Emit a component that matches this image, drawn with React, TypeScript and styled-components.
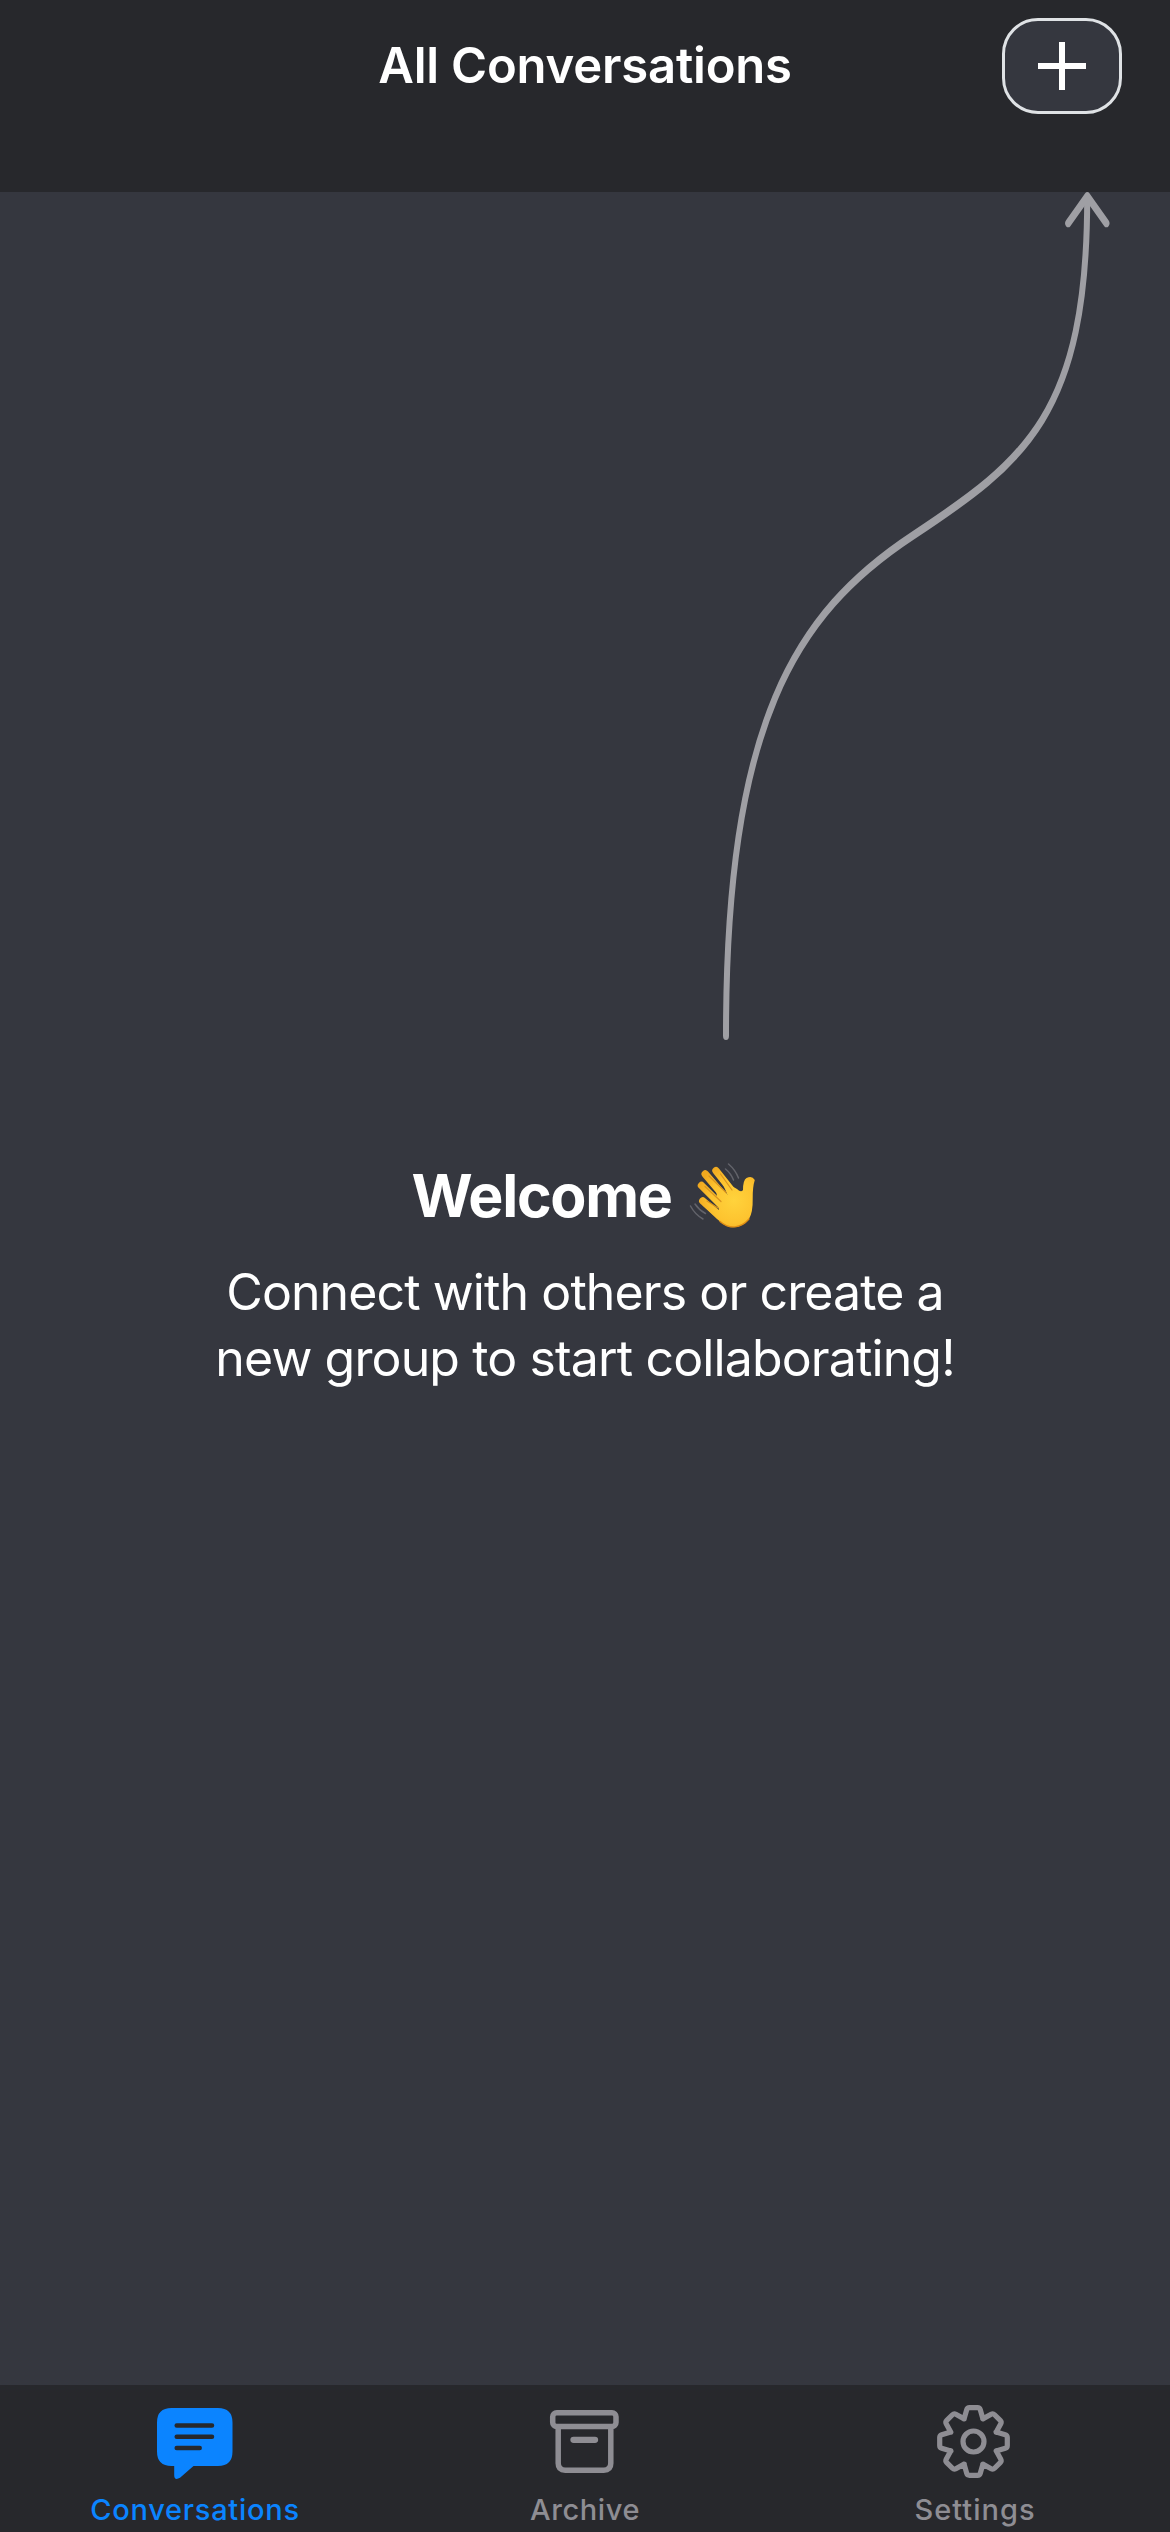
import React from "react";
import styled, { createGlobalStyle } from "styled-components";

const GlobalStyle = createGlobalStyle`
  * { box-sizing: border-box; }
  body { margin: 0; background: #35373f; }
`;

const Screen = styled.div`
  display: flex;
  flex-direction: column;
  width: 1170px;
  height: 2532px;
  overflow: hidden;
  background: #35373f;
  color: #fff;
  font-family: Inter, "Liberation Sans", sans-serif;
`;

const Header = styled.header`
  display: grid;
  grid-template-columns: 1fr auto 1fr;
  align-items: start;
  height: 192px;
  padding: 18px 48px 0;
  background: #27282c;
`;

const Title = styled.h1`
  grid-column: 2;
  margin: 0;
  font-size: 49px;
  font-weight: 600;
  line-height: 96px;
  letter-spacing: -0.2px;
  white-space: nowrap;
`;

const AddButton = styled.button`
  display: flex;
  align-items: center;
  justify-content: center;
  justify-self: end;
  width: 120px;
  height: 96px;
  padding: 0;
  border: 3px solid #dfe2e5;
  border-radius: 36px;
  background: #35373f;
  color: #fff;
`;

const Main = styled.main`
  display: flex;
  flex: 1;
  flex-direction: column;
  align-items: center;
`;

const Hint = styled.svg`
  display: block;
  align-self: flex-end;
  margin-right: 57px;
`;

const Welcome = styled.h2`
  display: flex;
  align-items: center;
  gap: 9px;
  height: 72px;
  margin: 118px 0 0;
  font-size: 59px;
  font-weight: 700;
  line-height: 72px;
  letter-spacing: -1.3px;
`;

const Hand = styled.svg`
  display: block;
  flex: none;
  margin: 0 -12px 2px 0;
`;

const Message = styled.p`
  margin: 27px 0 0;
  font-size: 50px;
  line-height: 66px;
  text-align: center;
  white-space: nowrap;
`;

const Line = styled.span<{ $spacing: number }>`
  display: block;
  letter-spacing: ${(p) => p.$spacing}px;
`;

const TabBar = styled.nav`
  display: grid;
  grid-template-columns: repeat(3, 1fr);
  height: 147px;
  background: #27282c;
`;

const Tab = styled.a<{ $active?: boolean; $spacing: number }>`
  display: flex;
  flex-direction: column;
  align-items: center;
  padding-top: 16px;
  color: ${(p) => (p.$active ? "#0b84ff" : "#8e8d93")};
  font-size: 29px;
  font-weight: 500;
  line-height: 36px;
  letter-spacing: ${(p) => p.$spacing}px;
`;

const TabIcon = styled.svg`
  display: block;
  width: 80px;
  height: 80px;
  margin-bottom: 11px;
`;

const PlusIcon = () => (
  <svg width="48" height="48" viewBox="0 0 48 48" stroke="currentColor" strokeWidth="6">
    <path d="M24 0V48M0 24H48" />
  </svg>
);

/* The arrow is stretched vertically, so diagonal runs come out slightly heavier. */
const HintArrow = () => (
  <Hint
    width="400"
    height="850"
    viewBox="713 137.140 400 607.140"
    preserveAspectRatio="none"
    fill="none"
    stroke="#9f9fa4"
    strokeWidth="6"
    strokeLinecap="round"
    strokeLinejoin="round"
  >
    <path d="M1087.200 141.400C1087.200 295.700 1025 329.600 913 382.500C794.300 438.400 726 517.100 726 739.900" />
    <path d="M1068.200 159.400L1087.300 140.200L1106.400 159.400" />
  </Hint>
);

const WavingHand = () => (
  <Hand width="90" height="90" viewBox="0 0 90 90" fill="none" strokeLinecap="round">
    <defs>
      <radialGradient id="skin" gradientUnits="userSpaceOnUse" cx="53" cy="50" r="38">
        <stop offset="0" stopColor="#ffd33c" />
        <stop offset="0.6" stopColor="#fdc32f" />
        <stop offset="1" stopColor="#f0a81f" />
      </radialGradient>
    </defs>
    <path
      fill="url(#skin)"
      d="M40 30L56 39Q60 43 62 40Q62 30 65.500 28Q71 25 73.800 30Q71.500 37 71.700 49Q72 62 68 69Q60 79 48 77Q41 74 36 69L21 55L38 61L37 53L35 40L47 46Z"
    />
    <g stroke="url(#skin)" strokeWidth="7.400">
      <path d="M35 20.700L55 46M24.200 24L48 52M20.500 35.500L45 60" />
      <path d="M21.800 51L44 70" />
    </g>
    <path d="M28 26L45 42.500M24 36.500L40 51.500M39.500 24L51 40M26 51L37 58" stroke="#d9941f" strokeWidth="1.200" />
    <path d="M39 71.500Q46 77.500 54 76.800Q62 76 68 69" stroke="#df8d14" strokeWidth="1.300" />
    <path d="M44.500 19Q50 23.500 52.500 30M47.500 14Q54.500 20 57.500 28M14 54Q18 60 24.500 63.500M9.500 56Q14 64.500 22 69" stroke="#62636a" strokeWidth="1.500" />
  </Hand>
);

const ChatIcon = () => (
  <TabIcon viewBox="155 2401 80 80">
    <path
      fill="currentColor"
      d="M171.500 2408H218Q232.500 2408 232.500 2422.500V2451.500Q232.500 2466 218 2466H193.500L180 2477.800Q174.200 2481 174.200 2475V2466H171.500Q157 2466 157 2451.500V2422.500Q157 2408 171.500 2408Z"
    />
    <path d="M176.700 2425.500H212M176.700 2436.700H212M176.700 2448H199.700" stroke="#27282c" strokeWidth="4.500" strokeLinecap="round" />
  </TabIcon>
);

const ArchiveIcon = () => (
  <TabIcon viewBox="545 2401 80 80" fill="none" stroke="currentColor" strokeWidth="5.500" strokeLinecap="round">
    <rect x="552.700" y="2412.700" width="63.300" height="13.800" rx="4" />
    <path d="M558.200 2427V2463.300Q558.200 2470.200 565.200 2470.200H603.800Q610.800 2470.200 610.800 2463.300V2427" />
    <path d="M573.500 2439.800H595" strokeWidth="6.300" />
  </TabIcon>
);

const gearPath = (() => {
  const turn = (x: number, y: number, i: number) => {
    const a = (i * Math.PI) / 4;
    return `${(x * Math.cos(a) - y * Math.sin(a)).toFixed(2)} ${(x * Math.sin(a) + y * Math.cos(a)).toFixed(2)}`;
  };
  let d = "";
  for (let i = 0; i < 8; i++) {
    d += `${i ? "L" : "M"}${turn(-9.4, -22.6, i)}L${turn(-6.8, -31.8, i)}Q${turn(-6.2, -33.8, i)} ${turn(-4, -33.8, i)}`;
    d += `L${turn(4, -33.8, i)}Q${turn(6.2, -33.8, i)} ${turn(6.8, -31.8, i)}L${turn(9.4, -22.6, i)}`;
  }
  return d + "Z";
})();

const SettingsIcon = () => (
  <TabIcon viewBox="-38.500 -40.500 80 80" fill="none" stroke="currentColor" strokeWidth="5.200" strokeLinejoin="round">
    <path d={gearPath} />
    <circle r="10.500" />
  </TabIcon>
);

export default function App() {
  return (
    <>
      <GlobalStyle />
      <Screen>
        <Header>
          <Title>All Conversations</Title>
          <AddButton aria-label="New conversation">
            <PlusIcon />
          </AddButton>
        </Header>
        <Main>
          <HintArrow />
          <Welcome>
            Welcome
            <WavingHand />
          </Welcome>
          <Message>
            <Line $spacing={-0.9}>Connect with others or create a</Line>
            <Line $spacing={-0.87}>new group to start collaborating!</Line>
          </Message>
        </Main>
        <TabBar>
          <Tab $active $spacing={0.75}>
            <ChatIcon />
            Conversations
          </Tab>
          <Tab $spacing={0.6}>
            <ArchiveIcon />
            Archive
          </Tab>
          <Tab $spacing={1}>
            <SettingsIcon />
            Settings
          </Tab>
        </TabBar>
      </Screen>
    </>
  );
}
